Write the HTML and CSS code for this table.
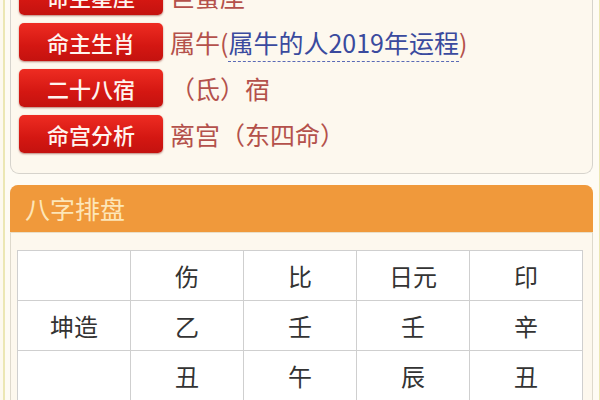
FILE: index.html
```html
<!DOCTYPE html>
<html>
<head>
<meta charset="utf-8">
<link rel="stylesheet" href="styles.css">
</head>
<body>
<div class="frame">
  <div class="card info">
    <div class="row"><span class="btn">命主星座</span><span class="val">巨蟹座</span></div>
    <div class="row"><span class="btn">命主生肖</span><span class="val">属牛(<a class="link">属牛的人2019年运程</a>)</span></div>
    <div class="row"><span class="btn">二十八宿</span><span class="val">（氐）宿</span></div>
    <div class="row"><span class="btn">命宫分析</span><span class="val">离宫（东四命）</span></div>
  </div>
  <div class="card bazi">
    <div class="head">八字排盘</div>
    <div class="body">
      <table class="grid">
        <tr><td></td><td>伤</td><td>比</td><td>日元</td><td>印</td></tr>
        <tr><td>坤造</td><td>乙</td><td>壬</td><td>壬</td><td>辛</td></tr>
        <tr><td></td><td>丑</td><td>午</td><td>辰</td><td>丑</td></tr>
      </table>
    </div>
  </div>
</div>
</body>
</html>
```
FILE: styles.css
```css
html, body {
  margin: 0;
  padding: 0;
  background: #fdf9ef;
  width: 600px;
  height: 400px;
  overflow: hidden;
  font-family: "Noto Sans CJK SC", "Noto Sans", sans-serif;
}
.frame {
  margin-left: 3px;
  width: 583px;
  border-left: 2px solid #ece7b4;
  border-right: 2px solid #ece7b4;
  padding: 0 6px 0 5px;
  min-height: 420px;
  background: #fefbf4;
}
.card {
  border: 1px solid #d6d3cc;
  background: #fdf8ee;
}
.info {
  margin-top: -31px;
  border-top: none;
  border-radius: 0 0 9px 9px;
  padding: 8px 8px 20px 8px;
  display: flex;
  flex-direction: column;
  gap: 8px;
}
.row {
  display: flex;
  align-items: center;
  gap: 7px;
  height: 38px;
}
.btn {
  width: 144px;
  height: 38px;
  box-sizing: border-box;
  border-radius: 5px;
  background: linear-gradient(#ee2c22, #d41712 60%, #c4120f);
  box-shadow: 0 1px 2px rgba(120, 20, 10, 0.5);
  color: #fff4ef;
  font-size: 22px;
  line-height: 38px;
  text-align: center;
  font-weight: 500;
}
.val {
  color: #b4514b;
  font-size: 25px;
  line-height: 38px;
  white-space: nowrap;
}
.link {
  color: #3a4a9e;
  border-bottom: 1.5px dashed #5a6ab6;
  padding-bottom: 1px;
}
.bazi {
  margin-top: 11px;
  border-radius: 9px 9px 0 0;
  border-color: #ded9cc;
}
.head {
  height: 47px;
  background: #f0993b;
  border-radius: 8px 8px 0 0;
  color: #fde6b8;
  font-size: 25px;
  line-height: 46px;
  padding-left: 15px;
  margin: -1px -1px 0 -1px;
  border-bottom: 1px solid #e9dfc8;
}
.body {
  padding: 17px 5px 0 6px;
}
.grid {
  width: 566px;
  border-collapse: collapse;
  background: #fff;
  table-layout: fixed;
}
.grid td {
  border: 1.5px solid #cfcfcf;
  height: 49px;
  text-align: center;
  font-size: 24px;
  color: #333;
  padding: 0;
}
```
